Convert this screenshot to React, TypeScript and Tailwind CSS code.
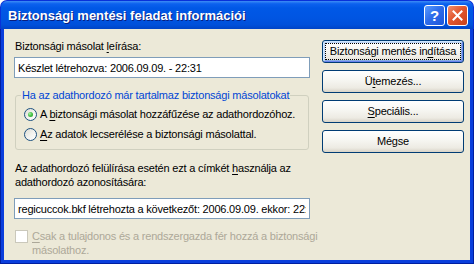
import type { ReactNode } from 'react';

function TitleBar() {
  return (
    <div className="h-[29px] shrink-0 flex items-center pl-[7px] pr-[5px] rounded-t-[7px] border-x border-t border-[#0831D9] bg-[linear-gradient(to_bottom,#3D8DF5_0%,#0C61EE_10%,#0058E6_25%,#0055E2_60%,#0050DA_85%,#0044C6_100%)]">
      <span className="flex-1 text-white font-bold text-[13px] leading-[16px] pt-px tracking-normal [text-shadow:1px_1px_0_#0A1E7C]">
        Biztonsági mentési feladat információi
      </span>
      <div className="flex gap-[2px] pt-px">
        <div className="w-[21px] h-[21px] rounded-[3px] border border-white flex items-center justify-center bg-[linear-gradient(135deg,#5A9CFF_0%,#2E6DEB_45%,#1C55DA_100%)]">
          <span className="text-white font-bold text-[15px] leading-none">?</span>
        </div>
        <div className="w-[21px] h-[21px] rounded-[3px] border border-white flex items-center justify-center bg-[linear-gradient(135deg,#F09070_0%,#E2572F_45%,#C7401B_100%)]">
          <svg width="11" height="11" viewBox="0 0 11 11">
            <path d="M1.5 1.5 L9.5 9.5 M9.5 1.5 L1.5 9.5" stroke="white" strokeWidth="2" strokeLinecap="square" />
          </svg>
        </div>
      </div>
    </div>
  );
}

function XpButton({ children, isDefault }: { children: ReactNode; isDefault?: boolean }) {
  return (
    <div
      className={
        'h-[23px] rounded-[3px] border border-[#003C74] bg-[linear-gradient(to_bottom,#FFFFFF_0%,#F7F7F3_40%,#EDEBE3_80%,#D8D3C7_100%)] flex p-[2px] ' +
        (isDefault
          ? 'shadow-[inset_1px_1px_0_#CEE7FF,inset_-1px_-1px_0_#6982EE,inset_2px_2px_0_#BCD4F6,inset_-2px_-2px_0_#89ADE4]'
          : '')
      }
    >
      <span
        className={
          'flex-1 flex items-center justify-center whitespace-nowrap ' +
          (isDefault ? 'border border-dotted border-black' : 'border border-transparent')
        }
      >
        {children}
      </span>
    </div>
  );
}

function Radio({ checked }: { checked?: boolean }) {
  return (
    <span className="w-[13px] h-[13px] shrink-0 rounded-full border border-[#1C5180] flex items-center justify-center bg-[linear-gradient(135deg,#DCDCD4_0%,#F2F2EE_50%,#FFFFFF_100%)]">
      {checked && (
        <span className="w-[5px] h-[5px] rounded-full bg-[radial-gradient(circle_at_35%_35%,#A6F0A6_0%,#4CC44C_45%,#1E9A1E_100%)]" />
      )}
    </span>
  );
}

const u = 'underline underline-offset-[2px]';

export default function App() {
  return (
    <div className="w-[474px] h-[264px] flex flex-col bg-white text-[11px] leading-[13px] text-black font-['Liberation_Sans',Arial,sans-serif]">
      <TitleBar />
      <div className="flex-1 flex border-x border-b border-[#001EA0]">
        <div className="flex-1 flex border-x-[3px] border-b-[3px] border-[#0A3EDC] bg-[#ECE9D8] pl-[10px] pt-[11px] tracking-[-0.2px]">
          <div className="w-[296px] flex flex-col">
            <div className="pl-px">
              Biztonsági másolat <span className={u}>l</span>eírása:
            </div>
            <input
              readOnly
              value="Készlet létrehozva: 2006.09.09. - 22:31"
              className="mt-[4px] h-[21px] w-full border border-[#7F9DB9] bg-white px-[3px] outline-none"
            />
            <fieldset className="mt-[11px] ml-px w-[294px] border border-[#D0D0BF] rounded-[3px] p-0">
              <legend className="ml-[5px] px-px text-[#0046D5]">
                Ha az adathordozó már tartalmaz biztonsági másolatokat
              </legend>
              <div className="flex flex-col gap-[7px] pl-[8px] pt-[6px] pb-[8px]">
                <div className="flex items-center gap-[3px] whitespace-nowrap">
                  <Radio checked />
                  <span>
                    A <span className={u}>b</span>iztonsági másolat hozzáfűzése az adathordozóhoz.
                  </span>
                </div>
                <div className="flex items-center gap-[3px] whitespace-nowrap">
                  <Radio />
                  <span>
                    <span className={u}>A</span>z adatok lecserélése a biztonsági másolattal.
                  </span>
                </div>
              </div>
            </fieldset>
            <div className="mt-[11px] pl-px leading-[14px] whitespace-nowrap">
              Az adathordozó felülírása esetén ezt a címkét <span className={u}>h</span>asználja az
              <br />
              adathordozó azonosítására:
            </div>
            <input
              readOnly
              value="regicuccok.bkf létrehozta a következőt: 2006.09.09. ekkor: 22:31"
              className="mt-[9px] h-[21px] w-full border border-[#7F9DB9] bg-white px-[3px] outline-none"
            />
            <div className="mt-[10px] ml-px flex items-start gap-[4px] text-[#ACA899] leading-[14px] whitespace-nowrap">
              <span className="mt-px w-[13px] h-[13px] shrink-0 border border-[#CAC8BB] bg-white" />
              <span>
                <span className={u}>C</span>sak a tulajdonos és a rendszergazda fér hozzá a biztonsági
                <br />
                másolathoz.
              </span>
            </div>
          </div>
          <div className="ml-[12px] w-[142px] flex flex-col gap-[7px]">
            <XpButton isDefault>
              <span>
                Biztonsági mentés in<span className={u}>d</span>ítása
              </span>
            </XpButton>
            <XpButton>
              <span>
                Ü<span className={u}>t</span>emezés...
              </span>
            </XpButton>
            <XpButton>
              <span>
                <span className={u}>S</span>peciális...
              </span>
            </XpButton>
            <XpButton>Mégse</XpButton>
          </div>
        </div>
      </div>
    </div>
  );
}
